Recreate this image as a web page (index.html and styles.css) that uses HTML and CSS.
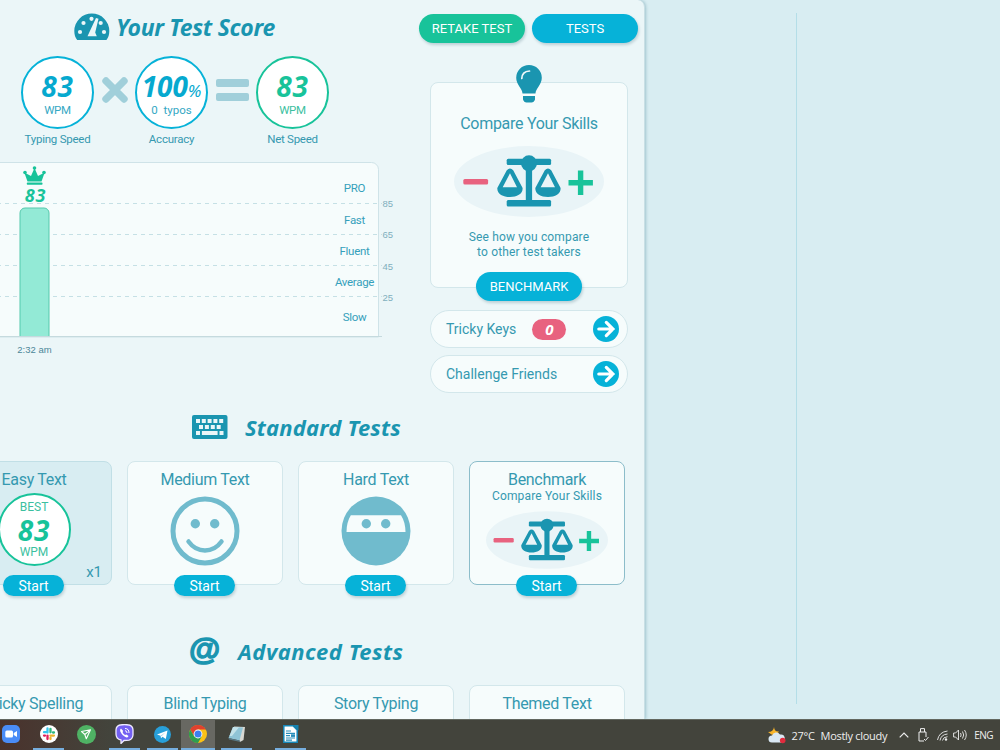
FILE: index.html
```html
<!DOCTYPE html>
<html lang="en">
<head>
    <meta charset="UTF-8">
    <meta name="viewport" content="width=device-width, initial-scale=1.0">
    <title>Your Test Score</title>
    <link rel="stylesheet" href="styles.css">
</head>
<body>
    <svg width="0" height="0" class="defs">
        <symbol id="scales" viewBox="0 0 150 71">
            <ellipse cx="75" cy="35.5" rx="75" ry="35.5" fill="#e9f4f7"/>
            <rect x="9.3" y="33" width="24.8" height="5.6" rx="1.5" fill="#e8627f"/>
            <path d="M114.5 36.7h24.4M126.6 24.5v24.5" stroke="#18c39a" stroke-width="5.4"/>
            <g fill="#1a95b0">
                <rect x="52.7" y="12.7" width="44.4" height="6.2" rx="1.5"/>
                <rect x="52.7" y="54" width="44.4" height="6.4" rx="1.5"/>
                <rect x="71.8" y="14" width="6.3" height="42"/>
                <circle cx="75" cy="17.3" r="8"/>
                <path id="pan" fill-rule="evenodd" d="M52.8 24.3Q56 20.8 59.2 24.3L68.6 42C69 48 63 51 56 51S43 48 43.3 42ZM56 27.2L48.7 41.3H63Z"/>
                <use href="#pan" x="38"/>
            </g>
        </symbol>
        <symbol id="arrow" viewBox="0 0 26 26">
            <circle cx="13" cy="13" r="13" fill="#06b2d8"/>
            <path d="M5.8 13h14M13.3 6.4l6.6 6.6-6.6 6.6" fill="none" stroke="#fff" stroke-width="3.2" stroke-linecap="round"/>
        </symbol>
    </svg>

    <div class="page">
        <main class="panel">
            <div class="top">
                <section class="score">
                    <h1 class="score-title">
                        <svg width="36" height="28" viewBox="0 0 36 28">
                            <path d="M3.2 27C1.2 24.5.3 21.5.3 18A17.5 17.5 0 0 1 35.3 18C35.3 21.5 34.4 24.5 32.4 27Z" fill="#1a95b0"/>
                            <g fill="#ebf6f8"><circle cx="6" cy="19" r="2.1"/><circle cx="9.5" cy="10" r="2.1"/><circle cx="17.5" cy="5.8" r="2.1"/><circle cx="26.7" cy="10" r="2.1"/><circle cx="30" cy="19" r="2.1"/>
                            <path d="M22 5L24.5 5.8 21.2 19.5 22.8 23.3H13.5L15.7 18.5Z"/></g>
                        </svg>
                        <span>Your Test Score</span>
                    </h1>
                    <div class="stats">
                        <div class="stat">
                            <div class="circle"><b>83</b><small>WPM</small></div>
                            <span>Typing Speed</span>
                        </div>
                        <svg class="operator" width="26" height="26" viewBox="0 0 26 26"><path d="M4 4l18 18m0-18l-18 18" stroke="#a0cfda" stroke-width="7.4" stroke-linecap="round"/></svg>
                        <div class="stat">
                            <div class="circle accuracy"><b>100<i>%</i></b><small>0 &nbsp;typos</small></div>
                            <span>Accuracy</span>
                        </div>
                        <svg class="operator" width="33" height="26" viewBox="0 0 33 26"><g fill="#a0cfda"><rect y="2" width="33" height="8" rx="2"/><rect y="16" width="33" height="8" rx="2"/></g></svg>
                        <div class="stat">
                            <div class="circle green"><b>83</b><small>WPM</small></div>
                            <span>Net Speed</span>
                        </div>
                    </div>
                    <svg class="chart" width="430" height="200" viewBox="0 0 430 200">
                        <path d="M-5 1.5H371.5a7 7 0 0 1 7 7V176H-5Z" fill="#f6fcfc" stroke="#cfe3e8"/>
                        <path d="M-3 42.5H382M-3 73.5H382M-3 104.5H382M-3 135.5H382" stroke="#c5e0e5" stroke-dasharray="4 4"/>
                        <path d="M0 175.5H382" stroke="#c5dade"/>
                        <path d="M20 175V52a5 5 0 0 1 5-5h19a5 5 0 0 1 5 5v123" fill="#93ead6" stroke="#55c9ad"/>
                        <g fill="#18c39a"><path d="M27.5 20.5L24.3 11.5 31 15 34.5 7 38 15 44.7 11.5 41.5 20.5Z"/><circle cx="34.5" cy="7" r="1.8"/><circle cx="25" cy="11.5" r="1.8"/><circle cx="44" cy="11.5" r="1.8"/><rect x="26.8" y="21.5" width="15.7" height="2.2" rx=".8"/></g>
                        <text class="bar-score" x="35.5" y="40.5" text-anchor="middle">83</text>
                        <g class="levels" text-anchor="middle">
                            <text x="354.5" y="31">PRO</text>
                            <text x="354.5" y="63">Fast</text>
                            <text x="354.5" y="94">Fluent</text>
                            <text x="354.5" y="125">Average</text>
                            <text x="354.5" y="160">Slow</text>
                        </g>
                        <g class="ticks">
                            <text x="382.5" y="46">85</text>
                            <text x="382.5" y="77">65</text>
                            <text x="382.5" y="109">45</text>
                            <text x="382.5" y="139.5">25</text>
                        </g>
                        <text class="time" x="34.5" y="192" text-anchor="middle">2:32 am</text>
                    </svg>
                </section>

                <aside class="side">
                    <div class="buttons">
                        <a class="btn retake">RETAKE TEST</a>
                        <a class="btn">TESTS</a>
                    </div>
                    <div class="compare">
                        <svg class="bulb" width="26" height="38" viewBox="0 0 26 38">
                            <path d="M6.5 28.5C6.5 23.5.2 20 .2 12.8A12.8 12.8 0 0 1 25.8 12.8C25.8 20 19.5 23.5 19.5 28.5ZM7 31h12v3.5Q18 37.5 15.5 37.5h-5Q8 37.5 7 34.5Z" fill="#1a95b0"/>
                            <path d="M5.8 13.5Q6 6.5 13.5 6" fill="none" stroke="#eef8fa" stroke-width="1.7" stroke-linecap="round"/>
                        </svg>
                        <h3>Compare Your Skills</h3>
                        <svg width="150" height="71"><use href="#scales"/></svg>
                        <p>See how you compare<br>to other test takers</p>
                        <a class="btn">BENCHMARK</a>
                    </div>
                    <div class="pill"><span>Tricky Keys</span><b>0</b><svg width="26" height="26"><use href="#arrow"/></svg></div>
                    <div class="pill"><span>Challenge Friends</span><svg width="26" height="26"><use href="#arrow"/></svg></div>
                </aside>
            </div>

            <h2>
                <svg width="36" height="24" viewBox="0 0 36 24">
                    <rect width="35.5" height="24" rx="2" fill="#1a95b0"/>
                    <path d="M4 6h27.2" stroke="#ebf6f8" stroke-width="4" stroke-dasharray="4 1.8"/>
                    <path d="M7 12h22" stroke="#ebf6f8" stroke-width="4" stroke-dasharray="4 1.9"/>
                    <path d="M4 18h4m1.9 0h15.7m1.9 0h4" stroke="#ebf6f8" stroke-width="4"/>
                </svg>
                <span>Standard Tests</span>
            </h2>
            <div class="cards">
                <div class="card done">
                    <h3>Easy Text</h3>
                    <div class="circle green best"><small>BEST</small><b>83</b><small>WPM</small></div>
                    <span class="count">x1</span>
                    <a class="start">Start</a>
                </div>
                <div class="card">
                    <h3>Medium Text</h3>
                    <svg class="face" width="70" height="70" viewBox="0 0 70 70">
                        <circle cx="35" cy="35" r="32" fill="none" stroke="#70bbcd" stroke-width="5"/>
                        <circle cx="25.3" cy="27.7" r="4.7" fill="#70bbcd"/><circle cx="44.7" cy="27.7" r="4.7" fill="#70bbcd"/>
                        <path d="M18.5 45.5Q25 54.5 35 54.5T51.5 45.5" fill="none" stroke="#70bbcd" stroke-width="4.5" stroke-linecap="round"/>
                    </svg>
                    <a class="start">Start</a>
                </div>
                <div class="card">
                    <h3>Hard Text</h3>
                    <svg class="face" width="70" height="70" viewBox="0 0 70 70">
                        <circle cx="35" cy="35" r="34.5" fill="#70bbcd"/>
                        <path d="M9.8 19.3H60Q64.5 26.5 64.5 36H5.5Q5.5 26.5 9.8 19.3Z" fill="#f6fcfc"/>
                        <circle cx="25.3" cy="27.7" r="4.7" fill="#70bbcd"/><circle cx="44.7" cy="27.7" r="4.7" fill="#70bbcd"/>
                    </svg>
                    <a class="start">Start</a>
                </div>
                <div class="card active">
                    <h3>Benchmark</h3>
                    <p>Compare Your Skills</p>
                    <svg class="mini" width="122" height="58"><use href="#scales"/></svg>
                    <a class="start">Start</a>
                </div>
            </div>

            <h2 class="advanced">
                <span class="at">@</span>
                <span>Advanced Tests</span>
            </h2>
            <div class="cards">
                <div class="card"><h3>Tricky Spelling</h3></div>
                <div class="card"><h3>Blind Typing</h3></div>
                <div class="card"><h3>Story Typing</h3></div>
                <div class="card"><h3>Themed Text</h3></div>
            </div>
        </main>
        <div class="divider"></div>
    </div>

    <footer class="taskbar">
        <div class="app">
            <svg width="18" height="18" viewBox="0 0 18 18"><rect width="18" height="18" rx="5" fill="#4a8cf7"/><rect x="3.3" y="5.5" width="7.7" height="7" rx="1.5" fill="#fff"/><path d="M11.7 8L15 6v6l-3.3-2Z" fill="#fff"/></svg>
        </div>
        <div class="app open">
            <svg width="18" height="18" viewBox="0 0 18 18"><circle cx="9" cy="9" r="9" fill="#fff"/><g fill="none" stroke-width="2.3" stroke-linecap="round"><path d="M7.5 3.5v4M4 7.2h3.3" stroke="#36c5f0"/><path d="M10.5 3.8v3.5M14 7.5h-1" stroke="#2eb67d"/><path d="M14 10.6h-3.5M10.5 14v-1" stroke="#ecb22e"/><path d="M7.5 14v-3.4M4 10.6h1" stroke="#e01e5a"/></g></svg>
        </div>
        <div class="app">
            <svg width="19" height="19" viewBox="0 0 19 19"><circle cx="9.5" cy="9.5" r="9.5" fill="#4fb264"/><path d="M4.5 6.5L13.5 4.8 9.3 13.8 7.8 9.5ZM7.8 9.5l5.7-4.7" fill="none" stroke="#fff" stroke-width="1.1" stroke-linejoin="round"/></svg>
        </div>
        <div class="app open">
            <svg width="19" height="20" viewBox="0 0 19 20"><path d="M5 1Q9.5 0 14 1 17.8 2 18 6V11Q17.5 15 14 16.2L9 16.5 6 19.5V16Q1 15 1 10V6Q1.2 2 5 1Z" fill="#7360f2" stroke="#eeeaff" stroke-width="1.3"/><path d="M6 4.5Q4.5 5.5 5.3 7.5 7.5 12 11.5 13.5 13 13.5 13.5 12L11.5 10.5 10 11Q8.2 10 7.5 8L8.2 7Z" fill="#fff"/><path d="M10 4.5q4 0 4 4.5M10 6.7q2 0 2 2.3" fill="none" stroke="#fff"/></svg>
        </div>
        <div class="app open">
            <svg width="17" height="17" viewBox="0 0 17 17"><circle cx="8.5" cy="8.5" r="8.5" fill="#289fd9"/><path d="M3 8.5L13.5 4.5 11.8 13 8.5 10.8 7 12.2 6.5 9.8Z" fill="#fff"/><path d="M6.5 9.8L11.5 6.2 7.5 10.3" fill="#a9cfe6"/></svg>
        </div>
        <div class="app open current">
            <svg width="18" height="18" viewBox="0 0 18 18"><circle cx="9" cy="9" r="9" fill="#fbc116"/><path d="M1.2 4.5A9 9 0 0 1 16.8 4.5H9L5.1 11.25Z" fill="#e0412f"/><path d="M1.2 4.5A9 9 0 0 0 9 18L12.9 11.25 5.1 11.25Z" fill="#2f9e4f"/><circle cx="9" cy="9" r="4.4" fill="#fff"/><circle cx="9" cy="9" r="3.5" fill="#3c7ff0"/></svg>
        </div>
        <div class="app open">
            <svg width="18" height="18" viewBox="0 0 18 18"><path d="M6 1.5L17 2 15.5 15 12 17Z" fill="#d8d8d2"/><path d="M5 2L15 2.5 11.5 15.5.5 13Z" fill="#8fc4d6"/><path d="M5 2L11 2.3 4 11 1.5 11Z" fill="#c3e2e9"/><path d="M.5 13L11.5 15.5 12.5 17 1 14.5Z" fill="#587986"/></svg>
        </div>
        <div class="app open writer">
            <svg width="16" height="18" viewBox="0 0 16 18"><path d="M.8.8H10L14.2 5V17.2H.8Z" fill="#fff" stroke="#1687b8" stroke-width="1.5"/><path d="M10 0h5.5v5.5Z" fill="#1582b0"/><path d="M3 6h5M3 8.3h9M3 13h9M3 15.2h6M3 10.6h4" stroke="#268dbb" stroke-width="1.2"/><rect x="8" y="9.3" width="4" height="2.6" fill="#268dbb"/></svg>
        </div>
        <div class="tray">
            <svg width="18" height="18" viewBox="0 0 18 18"><path d="M6 1Q6.5 6 11 5.5 8 10 3.5 8.5L0 6Q5.5 6 6 1Z" fill="#f6b42b"/><path d="M4 16.5A3.5 3.5 0 0 1 4 9.5 4.5 4.5 0 0 1 12 8.5 4 4 0 0 1 13.5 16.5Z" fill="#d9e8f4"/><circle cx="14.7" cy="14.5" r="2.8" fill="#e22b3d"/></svg>
            <span class="temp">27°C</span>
            <span class="sky">Mostly cloudy</span>
            <svg class="chevron" width="10" height="6" viewBox="0 0 10 6"><path d="M.7 5.3L5 1l4.3 4.3" fill="none" stroke="#eee" stroke-width="1.2"/></svg>
            <svg class="usb" width="11" height="14" viewBox="0 0 11 14"><path d="M2.5 4V.6h4V4M1 4h7v5M1 4v9h5M6 11l1.5 1.5L10.5 9" fill="none" stroke="#eee"/></svg>
            <svg class="wifi" width="11" height="11" viewBox="0 0 11 11"><path d="M.5 10Q2 2 10.5 1M3 10.5Q4 4.5 10.5 4M5.5 10.5Q6 7 10.5 6.7" fill="none" stroke="#ddd"/><circle cx="9" cy="9.5" r="1.2" fill="#eee"/></svg>
            <svg class="sound" width="14" height="12" viewBox="0 0 14 12"><path d="M.6 4h2L5.5 1v10L2.6 8h-2ZM7.5 4q1.3 2 0 4M9.5 2.5q2.4 3.5 0 7M11.5 1q3.5 5 0 10" fill="none" stroke="#eee" stroke-width=".9"/></svg>
            <span class="lang">ENG</span>
        </div>
    </footer>
</body>
</html>
```
FILE: styles.css
```css
* {
    box-sizing: border-box;
}

body {
    margin: 0;
    width: 1000px;
    height: 750px;
    overflow: hidden;
    display: flex;
    flex-direction: column;
    background-color: #d8edf2;
    color: #3599b0;
    font-family: Roboto, sans-serif;
}

svg {
    display: block;
    flex: none;
}

h1, h2, h3, p {
    margin: 0;
    font-weight: 400;
}

.defs {
    position: absolute;
}

.page {
    display: flex;
    height: 719px;
    overflow: hidden;
}

.panel {
    width: 645px;
    flex: none;
    background-color: #ebf6f8;
    border-right: 1px solid #c8dfe5;
    border-top-right-radius: 7px;
    box-shadow: 1px 0 3px rgba(60, 120, 140, 0.35);
}

.divider {
    width: 1px;
    height: 691px;
    margin: 13px 0 0 151px;
    background-color: #b4dee8;
}

.top {
    display: flex;
    height: 415px;
}

.score {
    width: 400px;
    padding-top: 13px;
}

.score-title, h2 {
    display: flex;
    color: #1a95b0;
    font-family: "Noto Sans", sans-serif;
    font-size: 23px;
    font-weight: 700;
    font-style: italic;
    line-height: 28px;
    white-space: nowrap;
}

.score-title {
    gap: 6px;
    padding-left: 74px;
    letter-spacing: -0.3px;
}

.stats {
    display: flex;
    gap: 7.5px;
    padding: 15px 0 0 21px;
    height: 120px;
}

.stat {
    width: 73px;
    text-align: center;
    font-size: 11.5px;
    line-height: 13px;
    letter-spacing: -0.25px;
    white-space: nowrap;
}

.circle {
    width: 73px;
    height: 73px;
    margin-bottom: 4px;
    padding-top: 13px;
    border: 2px solid #06b2d8;
    border-radius: 50%;
    background-color: #fff;
    color: #06a9cf;
    text-align: center;
}

.circle b {
    display: block;
    font-family: "Noto Sans", sans-serif;
    font-size: 28px;
    font-style: italic;
    line-height: 30px;
    letter-spacing: 0.8px;
}

.circle small {
    display: block;
    margin-top: 3px;
    font-size: 11.5px;
    line-height: 13px;
    color: #35a8c4;
}

.circle.green {
    border-color: #18c39a;
    color: #18c39a;
}

.circle.green small {
    color: #3cbf9f;
}

.circle.accuracy b {
    height: 30px;
    letter-spacing: -0.1px;
}

.circle.accuracy small {
    letter-spacing: 0;
}

.circle i {
    font-size: 17px;
    font-weight: 400;
}

.operator {
    margin-top: 21px;
}

.bar-score {
    font: italic 700 18px "Noto Sans", sans-serif;
    letter-spacing: 0.8px;
    fill: #18c39a;
}

.levels {
    font-size: 11.5px;
    letter-spacing: -0.3px;
    fill: #35a0bb;
}

.ticks, .time {
    font-family: "Liberation Sans", sans-serif;
    font-size: 9.5px;
    fill: #80afbd;
}

.time {
    fill: #4b8799;
}

.side {
    padding: 14px 0 0 19px;
}

.buttons {
    display: flex;
    gap: 7px;
}

.btn {
    width: 106px;
    height: 29px;
    border-radius: 15px;
    background-color: #06b2d8;
    color: #fff;
    font-size: 13px;
    line-height: 30px;
    text-align: center;
    box-shadow: 1px 2px 3px rgba(0, 60, 80, 0.2);
}

.retake {
    background-color: #18c39a;
}

.compare {
    display: flex;
    flex-direction: column;
    align-items: center;
    width: 198px;
    height: 206px;
    margin: 39px 0 22px 11px;
    border: 1px solid #d3e7eb;
    border-radius: 8px;
    background-color: #f6fcfc;
}

.bulb {
    margin-top: -18px;
}

.compare h3 {
    margin: 11px 0 12px;
    font-size: 16px;
    line-height: 20px;
    letter-spacing: -0.28px;
}

.compare p {
    margin: 13px 0 12px;
    font-size: 12px;
    line-height: 15px;
    text-align: center;
    letter-spacing: 0.15px;
}

.compare .btn {
    flex: none;
}

.pill {
    display: flex;
    align-items: center;
    width: 198px;
    height: 38px;
    margin: 0 0 7px 11px;
    padding: 0 8px 0 15px;
    border: 1px solid #d3e7eb;
    border-radius: 19px;
    background-color: #f6fcfc;
    font-size: 14px;
}

.pill b {
    width: 34px;
    height: 21px;
    margin-left: 16px;
    border-radius: 11px;
    background-color: #e8627f;
    color: #fff;
    font-family: "Noto Sans", sans-serif;
    font-size: 15px;
    font-style: italic;
    line-height: 21px;
    text-align: center;
}

.pill svg {
    margin-left: auto;
}

h2 {
    gap: 17px;
    height: 46px;
    padding-left: 192px;
    font-size: 22px;
    line-height: 25px;
    letter-spacing: 0.2px;
}

.cards {
    display: flex;
    gap: 15px;
    width: 669px;
    margin-left: -44px;
}

.card {
    display: flex;
    flex-direction: column;
    align-items: center;
    position: relative;
    width: 156px;
    height: 124px;
    flex: none;
    padding-top: 8px;
    border: 1px solid #d3e7eb;
    border-radius: 8px;
    background-color: #f6fcfc;
}

.card h3 {
    font-size: 16px;
    line-height: 19px;
    letter-spacing: -0.3px;
}

.card p {
    font-size: 12px;
    line-height: 15px;
    letter-spacing: 0.15px;
}

.card.done {
    background-color: #d8edf2;
    border-color: #c1dfe6;
}

.card.active {
    border-color: #8cbdca;
}

.face {
    margin-top: 7px;
}

.mini {
    margin-top: 7px;
}

.best {
    margin-top: 4px;
    padding-top: 6px;
}

.best b {
    line-height: 31px;
    margin-top: 1px;
}

.best small {
    margin-top: 0;
    font-size: 12px;
}

.count {
    position: absolute;
    right: 9px;
    bottom: 3px;
    font-size: 15px;
}

.start {
    position: absolute;
    left: 46px;
    bottom: -12px;
    width: 61px;
    height: 21px;
    border-radius: 11px;
    background-color: #06b2d8;
    color: #fff;
    font-size: 14px;
    line-height: 22px;
    text-align: center;
    box-shadow: 1px 2px 3px rgba(0, 60, 80, 0.2);
}

.advanced {
    height: 49px;
    margin-top: 51px;
    padding-left: 189px;
    letter-spacing: 0.5px;
}

.advanced span {
    line-height: 30px;
}

.advanced .at {
    width: 32px;
    font-family: "Liberation Sans", sans-serif;
    font-size: 32px;
    font-style: normal;
    line-height: 26px;
    -webkit-text-stroke: 1.3px #1a95b0;
}

.taskbar {
    display: flex;
    height: 31px;
    background: linear-gradient(90deg, #4a322c, #43443c 110px);
    border-top: 1px solid #62675f;
    color: #eee;
    font-family: "Open Sans", sans-serif;
}

.app {
    display: flex;
    justify-content: center;
    align-items: center;
    width: 31px;
    margin-right: 7px;
    height: 30px;
    flex: none;
    border-bottom: 2px solid transparent;
}

.app:first-child {
    margin-left: -5px;
}

.app.open {
    border-bottom-color: #76aede;
}

.app.current {
    width: 34px;
    margin: 0 6px 0 -4px;
    background-color: #686862;
    background-clip: padding-box;
}

.app.writer {
    margin-left: 16px;
}

.tray {
    display: flex;
    align-items: center;
    margin-left: auto;
    padding-right: 7px;
    font-size: 11px;
}

.temp {
    margin-left: 6px;
    letter-spacing: -0.3px;
}

.sky {
    margin-left: 6px;
    letter-spacing: -0.3px;
}

.chevron {
    margin-left: 12px;
}

.usb {
    margin-left: 9px;
}

.wifi {
    margin-left: 8px;
}

.sound {
    margin-left: 5px;
}

.lang {
    margin-left: 7px;
    font-size: 10px;
    letter-spacing: -0.5px;
}
```
